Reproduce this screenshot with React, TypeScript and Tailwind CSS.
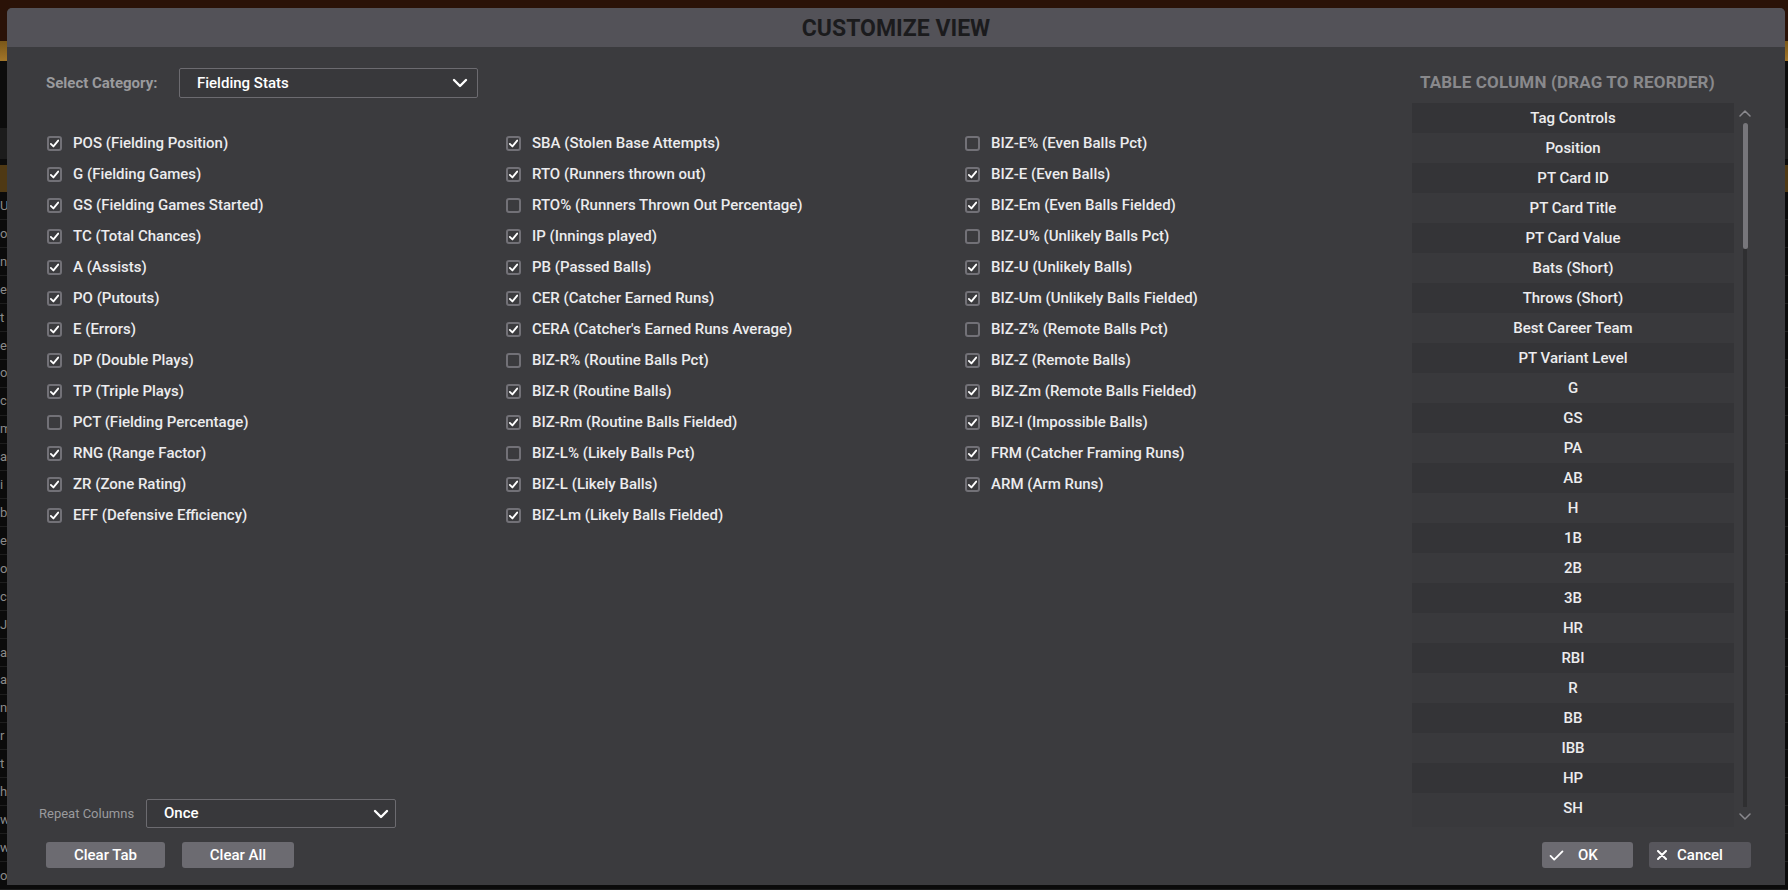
import React from "react";

type Stat = { label: string; on: boolean };

const colOne: Stat[] = [
  { label: "POS (Fielding Position)", on: true },
  { label: "G (Fielding Games)", on: true },
  { label: "GS (Fielding Games Started)", on: true },
  { label: "TC (Total Chances)", on: true },
  { label: "A (Assists)", on: true },
  { label: "PO (Putouts)", on: true },
  { label: "E (Errors)", on: true },
  { label: "DP (Double Plays)", on: true },
  { label: "TP (Triple Plays)", on: true },
  { label: "PCT (Fielding Percentage)", on: false },
  { label: "RNG (Range Factor)", on: true },
  { label: "ZR (Zone Rating)", on: true },
  { label: "EFF (Defensive Efficiency)", on: true },
];

const colTwo: Stat[] = [
  { label: "SBA (Stolen Base Attempts)", on: true },
  { label: "RTO (Runners thrown out)", on: true },
  { label: "RTO% (Runners Thrown Out Percentage)", on: false },
  { label: "IP (Innings played)", on: true },
  { label: "PB (Passed Balls)", on: true },
  { label: "CER (Catcher Earned Runs)", on: true },
  { label: "CERA (Catcher's Earned Runs Average)", on: true },
  { label: "BIZ-R% (Routine Balls Pct)", on: false },
  { label: "BIZ-R (Routine Balls)", on: true },
  { label: "BIZ-Rm (Routine Balls Fielded)", on: true },
  { label: "BIZ-L% (Likely Balls Pct)", on: false },
  { label: "BIZ-L (Likely Balls)", on: true },
  { label: "BIZ-Lm (Likely Balls Fielded)", on: true },
];

const colThree: Stat[] = [
  { label: "BIZ-E% (Even Balls Pct)", on: false },
  { label: "BIZ-E (Even Balls)", on: true },
  { label: "BIZ-Em (Even Balls Fielded)", on: true },
  { label: "BIZ-U% (Unlikely Balls Pct)", on: false },
  { label: "BIZ-U (Unlikely Balls)", on: true },
  { label: "BIZ-Um (Unlikely Balls Fielded)", on: true },
  { label: "BIZ-Z% (Remote Balls Pct)", on: false },
  { label: "BIZ-Z (Remote Balls)", on: true },
  { label: "BIZ-Zm (Remote Balls Fielded)", on: true },
  { label: "BIZ-I (Impossible Balls)", on: true },
  { label: "FRM (Catcher Framing Runs)", on: true },
  { label: "ARM (Arm Runs)", on: true },
];

const tableColumns = [
  "Tag Controls",
  "Position",
  "PT Card ID",
  "PT Card Title",
  "PT Card Value",
  "Bats (Short)",
  "Throws (Short)",
  "Best Career Team",
  "PT Variant Level",
  "G",
  "GS",
  "PA",
  "AB",
  "H",
  "1B",
  "2B",
  "3B",
  "HR",
  "RBI",
  "R",
  "BB",
  "IBB",
  "HP",
  "SH",
];

// letters of the page underneath that peek out on the left
const behindRows = ["U", "o", "n", "e", "t", "e", "o", "c", "m", "a", "i", "b", "e", "o", "c", "J", "a", "a", "n", "r", "t", "h", "w", "w", "o"];

function Chevron({ className }: { className?: string }) {
  return (
    <svg viewBox="0 0 16 10" className={className} fill="none">
      <path d="M2 2 L8 8 L14 2" stroke="currentColor" strokeWidth="2.4" strokeLinecap="round" strokeLinejoin="round" />
    </svg>
  );
}

function CheckBox({ on }: { on: boolean }) {
  return (
    <span className="flex h-[15px] w-[15px] shrink-0 items-center justify-center rounded-[3px] border-2 border-[#727177]">
      {on && (
        <svg viewBox="0 0 12 12" className="h-[11px] w-[11px]" fill="none">
          <path d="M2 6.4 L4.8 9.2 L10 2.8" stroke="white" strokeWidth="2" strokeLinecap="round" strokeLinejoin="round" />
        </svg>
      )}
    </span>
  );
}

function StatColumn({ items }: { items: Stat[] }) {
  return (
    <div className="flex flex-col">
      {items.map((item) => (
        <label key={item.label} className="flex h-[31px] items-center gap-[11px]">
          <CheckBox on={item.on} />
          <span className="whitespace-nowrap text-[15px] font-medium text-[#ececee]">{item.label}</span>
        </label>
      ))}
    </div>
  );
}

export default function App() {
  return (
    <div className="relative h-[890px] w-[1788px] overflow-hidden bg-[#0b0b0b] font-['Roboto',sans-serif]">
      {/* Page behind the dialog */}
      <div className="flex h-full w-full flex-col">
        <div className="h-[41px] bg-[#2a1207]" />
        <div className="h-[20px] bg-gradient-to-b from-[#7a5719] to-[#a27629]" />
        <div className="h-[67px] bg-[#0c0c0c]" />
        <div className="h-[32px] bg-[#1c1c1c]" />
        <div className="h-[6px] bg-[#0c0c0c]" />
        <div className="h-[27px] bg-[#4f3914]" />
        {behindRows.map((t, i) => (
          <div key={i} className="flex h-[28px] items-center border-b border-[#1e1e1e]">
            <span className="text-[13px] text-[#8a8a8a]">{t}</span>
          </div>
        ))}
      </div>

      {/* Customize view dialog */}
      <div className="absolute left-[7px] top-[8px] flex h-[877px] w-[1778px] flex-col overflow-hidden rounded-t-[5px] bg-[#3b3b3e]">
        <div className="flex h-[39px] shrink-0 items-center justify-center bg-[#535258] pt-[2px]">
          <h1 className="text-[23px] font-bold leading-none text-[#1b1b1d]">CUSTOMIZE VIEW</h1>
        </div>

        <div className="flex h-[781px] shrink-0">
          {/* Left: category + stat checkboxes */}
          <div className="flex min-w-0 flex-1 flex-col">
            <div className="mt-[21px] flex h-[30px] items-center pl-[39px]">
              <span className="w-[110px] whitespace-nowrap text-[15px] font-bold text-[#9a9a9d]">Select Category:</span>
              <div className="ml-[23px] flex h-[30px] w-[299px] items-center justify-between rounded-[2px] border border-[#6c6b70] bg-[#38383b] pl-[17px] pr-[9px]">
                <span className="text-[15px] font-medium text-white">Fielding Stats</span>
                <Chevron className="h-[10px] w-[16px] text-white" />
              </div>
            </div>

            <div className="mt-[30px] grid grid-cols-[459px_459px_1fr] pl-[40px]">
              <StatColumn items={colOne} />
              <StatColumn items={colTwo} />
              <StatColumn items={colThree} />
            </div>

            <div className="flex-1" />

            <div className="flex h-[29px] items-center pl-[32px]">
              <span className="w-[93px] whitespace-nowrap text-[13px] text-[#9a9a9d]">Repeat Columns</span>
              <div className="ml-[14px] flex h-[29px] w-[250px] items-center justify-between rounded-[2px] border border-[#6c6b70] bg-[#38383b] pl-[17px] pr-[6px]">
                <span className="text-[15px] font-medium text-white">Once</span>
                <Chevron className="h-[10px] w-[16px] text-white" />
              </div>
            </div>
          </div>

          {/* Right: column order list */}
          <div className="flex w-[373px] shrink-0 flex-col">
            <div className="mt-[26px] flex h-[20px] items-center pl-[8px]">
              <span className="whitespace-nowrap text-[17px] font-bold tracking-[0.15px] text-[#89898c]">TABLE COLUMN (DRAG TO REORDER)</span>
            </div>
            <div className="mt-[10px] flex h-[724px]">
              <div className="w-[322px] overflow-hidden bg-[#39393c]">
                {tableColumns.map((c, i) => (
                  <div
                    key={c}
                    className={`flex h-[30px] items-center justify-center text-[15px] font-medium text-[#ececee] ${i % 2 === 0 ? "bg-[#343437]" : ""}`}
                  >
                    {c}
                  </div>
                ))}
              </div>
              <div className="ml-[4px] flex w-[14px] flex-col items-center pb-[7px] pt-[7px]">
                <svg viewBox="0 0 12 7" className="h-[7px] w-[12px] text-[#8a898e]" fill="none">
                  <path d="M1 6 L6 1 L11 6" stroke="currentColor" strokeWidth="1.5" strokeLinecap="round" strokeLinejoin="round" />
                </svg>
                <div className="mt-[6px] h-[126px] w-[5px] rounded-full bg-[#77767b]" />
                <div className="w-[4px] flex-1 bg-[#2f2f31]" />
                <svg viewBox="0 0 12 7" className="mt-[6px] h-[7px] w-[12px] text-[#8a898e]" fill="none">
                  <path d="M1 1 L6 6 L11 1" stroke="currentColor" strokeWidth="1.5" strokeLinecap="round" strokeLinejoin="round" />
                </svg>
              </div>
            </div>
          </div>
        </div>

        {/* Footer buttons */}
        <div className="mt-[14px] flex h-[26px] items-center justify-between pl-[39px] pr-[34px]">
          <div className="flex gap-[17px]">
            <button type="button" className="h-[26px] w-[119px] rounded-[3px] bg-[#6c6b71] text-[15px] font-medium text-white">
              Clear Tab
            </button>
            <button type="button" className="h-[26px] w-[112px] rounded-[3px] bg-[#6c6b71] text-[15px] font-medium text-white">
              Clear All
            </button>
          </div>
          <div className="flex gap-[16px]">
            <button type="button" className="flex h-[26px] w-[91px] items-center rounded-[3px] bg-[#6c6b71] pl-[7px] text-[15px] font-medium text-white">
              <svg viewBox="0 0 16 12" className="h-[11px] w-[15px]" fill="none">
                <path d="M1.5 6.5 L5.5 10.5 L14.5 1.5" stroke="white" strokeWidth="2" strokeLinecap="round" strokeLinejoin="round" />
              </svg>
              <span className="ml-[14px]">OK</span>
            </button>
            <button type="button" className="flex h-[26px] w-[102px] items-center rounded-[3px] bg-[#57565c] pl-[8px] text-[15px] font-medium text-white">
              <svg viewBox="0 0 10 10" className="h-[10px] w-[10px]" fill="none">
                <path d="M1 1 L9 9 M9 1 L1 9" stroke="white" strokeWidth="2" strokeLinecap="round" />
              </svg>
              <span className="ml-[10px]">Cancel</span>
            </button>
          </div>
        </div>
      </div>
    </div>
  );
}
